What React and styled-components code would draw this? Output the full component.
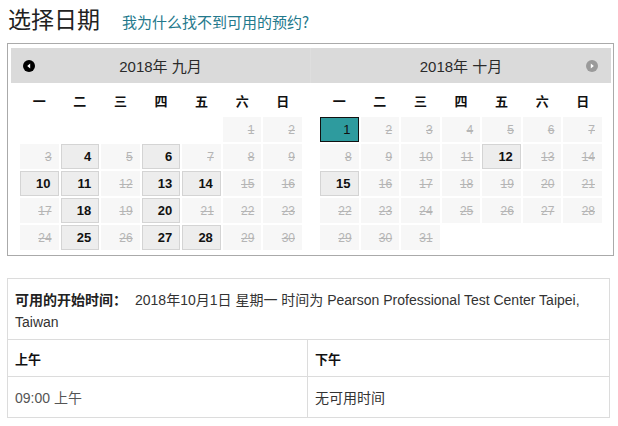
import React from "react";
import styled, { createGlobalStyle } from "styled-components";

const Global = createGlobalStyle`
  html, body { margin: 0; padding: 0; background: #fff; }
  body { font-family: "Liberation Sans", "Noto Sans CJK SC", sans-serif; color: #333; }
`;

const Page = styled.div`
  padding: 4px 9px 0 7px;
  width: 618px;
  box-sizing: border-box;
`;

const TitleRow = styled.div`
  display: flex;
  align-items: baseline;
  gap: 22px;
  height: 39px;
  padding-left: 1px;
`;

const Title = styled.h2`
  margin: 0;
  font-size: 23px;
  font-weight: 400;
  color: #222;
  font-family: "Noto Sans CJK SC", sans-serif;
  line-height: 28px;
`;

const HelpLink = styled.a`
  font-size: 15px;
  color: #23798c;
  text-decoration: none;
  font-family: "Noto Sans CJK SC", sans-serif;
`;

const CalendarBox = styled.div`
  border: 1px solid #aaa;
  padding: 4px 2px 5px 3px;
  display: flex;
  width: 607px;
  box-sizing: border-box;
`;

const Month = styled.div`
  flex: 1;
  display: flex;
  flex-direction: column;
`;

const MonthHeader = styled.div`
  position: relative;
  height: 35px;
  background: #dadada;
  display: flex;
  align-items: center;
  justify-content: center;
  font-size: 15px;
  color: #2a2a2a;
  font-family: "Liberation Sans", "Noto Sans CJK SC", sans-serif;
  ${(p) => (p.$first ? "border-right: 1px solid #dedede;" : "")}
`;

const NavButton = styled.span`
  position: absolute;
  top: 12px;
  ${(p) => (p.$side === "left" ? "left: 12px;" : "right: 13px;")}
  width: 12px;
  height: 12px;
  display: flex;
`;

const Weekdays = styled.div`
  display: grid;
  grid-template-columns: repeat(7, 1fr);
  column-gap: 2px;
  padding: 0 9px;
  height: 34px;
  align-items: center;
`;

const Weekday = styled.div`
  text-align: center;
  font-size: 13px;
  font-weight: 700;
  color: #111;
  font-family: "Noto Sans CJK SC", sans-serif;
`;

const Grid = styled.div`
  display: grid;
  grid-template-columns: repeat(7, 1fr);
  grid-auto-rows: 25px;
  gap: 2px;
  padding: 0 9px;
`;

const cellStyles = {
  empty: "background: transparent;",
  disabled:
    "background: #f7f7f7; color: #b5b5b5; text-decoration: line-through; font-size: 12px;",
  available:
    "background: #ededed; border: 1px solid #d4d4d4; color: #111; font-weight: 700; font-size: 13px;",
  selected:
    "background: #2e9b9e; border: 1px solid #111; color: #111; font-size: 13px;",
};

const Cell = styled.div`
  box-sizing: border-box;
  display: flex;
  align-items: center;
  justify-content: flex-end;
  padding-right: 7px;
  ${(p) => cellStyles[p.$variant]}
`;

const InfoTable = styled.div`
  margin-top: 22px;
  width: 603px;
  border: 1px solid #dcdcdc;
  box-sizing: border-box;
  display: grid;
  grid-template-columns: 300px 1fr;
`;

const InfoCell = styled.div`
  grid-column: 1 / -1;
  padding: 10px 7px 6px 7px;
  font-size: 14px;
  line-height: 22px;
  color: #333;
  border-bottom: 1px solid #dcdcdc;
`;

const Strong = styled.span`
  font-weight: 700;
  color: #222;
  margin-right: 8px;
`;

const HeadCell = styled.div`
  height: 36px;
  display: flex;
  align-items: center;
  padding: 0 7px;
  font-size: 13px;
  font-weight: 700;
  color: #111;
  border-bottom: 1px solid #dcdcdc;
  ${(p) => (p.$first ? "border-right: 1px solid #dcdcdc;" : "")}
`;

const DataCell = styled.div`
  height: 40px;
  display: flex;
  align-items: center;
  padding: 0 7px;
  font-size: 14px;
  color: ${(p) => (p.$muted ? "#555" : "#333")};
  ${(p) => (p.$first ? "border-right: 1px solid #dcdcdc;" : "")}
`;

const Arrow = ({ dir, color }) => (
  <svg width="12" height="12" viewBox="0 0 12 12">
    <circle cx="6" cy="6" r="6" fill={color} />
    {dir === "left" ? (
      <path d="M7.2 3.4 L4.2 6 L7.2 8.6 Z" fill="#fff" />
    ) : (
      <path d="M4.8 3.4 L7.8 6 L4.8 8.6 Z" fill="#fff" />
    )}
  </svg>
);

const weekdays = ["一", "二", "三", "四", "五", "六", "日"];

function buildDays(offset, total, available, selected) {
  const cells = [];
  for (let i = 0; i < offset; i++) cells.push({ key: "e" + i, variant: "empty" });
  for (let d = 1; d <= total; d++) {
    let variant = "disabled";
    if (available.includes(d)) variant = "available";
    if (d === selected) variant = "selected";
    cells.push({ key: "d" + d, day: d, variant });
  }
  return cells;
}

const months = [
  {
    title: "2018年 九月",
    nav: "left",
    days: buildDays(5, 30, [4, 6, 10, 11, 13, 14, 18, 20, 25, 27, 28], null),
  },
  {
    title: "2018年 十月",
    nav: "right",
    days: buildDays(0, 31, [12, 15], 1),
  },
];

export default function App() {
  return (
    <Page>
      <Global />
      <TitleRow>
        <Title>选择日期</Title>
        <HelpLink href="#">我为什么找不到可用的预约?</HelpLink>
      </TitleRow>
      <CalendarBox>
        {months.map((m, i) => (
          <Month key={m.title}>
            <MonthHeader $first={i === 0}>
              {m.nav === "left" ? (
                <NavButton $side="left">
                  <Arrow dir="left" color="#000" />
                </NavButton>
              ) : (
                <NavButton $side="right">
                  <Arrow dir="right" color="#9a9a9a" />
                </NavButton>
              )}
              {m.title}
            </MonthHeader>
            <Weekdays>
              {weekdays.map((w) => (
                <Weekday key={w}>{w}</Weekday>
              ))}
            </Weekdays>
            <Grid>
              {m.days.map((c) => (
                <Cell key={c.key} $variant={c.variant}>
                  {c.day}
                </Cell>
              ))}
            </Grid>
          </Month>
        ))}
      </CalendarBox>
      <InfoTable>
        <InfoCell>
          <Strong>可用的开始时间：</Strong>
          2018年10月1日 星期一 时间为 Pearson Professional Test Center Taipei, Taiwan
        </InfoCell>
        <HeadCell $first>上午</HeadCell>
        <HeadCell>下午</HeadCell>
        <DataCell $first $muted>09:00 上午</DataCell>
        <DataCell>无可用时间</DataCell>
      </InfoTable>
    </Page>
  );
}
